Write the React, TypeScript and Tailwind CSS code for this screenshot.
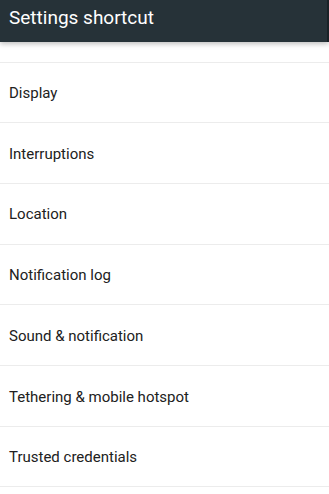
const items = [
  'Display',
  'Interruptions',
  'Location',
  'Notification log',
  'Sound & notification',
  'Tethering & mobile hotspot',
  'Trusted credentials',
];

export default function App() {
  return (
    <div className="w-[329px] h-[494px] overflow-hidden bg-white" style={{ fontFamily: 'Roboto, "Noto Sans", sans-serif' }}>
      <div className="relative z-10 h-[42px] bg-[#263238] border-r-2 border-[#1a2227] flex items-center pl-[9px] pb-[7px] shadow-[0_2px_5px_rgba(0,0,0,0.25)]">
        <span className="text-white text-[19px] leading-none">Settings shortcut</span>
      </div>
      <div className="h-[20.5px] border-b border-[#ececec]" />
      {items.map((label) => (
        <div
          key={label}
          className="h-[60.7px] border-b border-[#ececec] flex items-center pl-[9px] pt-[2px] text-[15px] text-[#212121]"
        >
          {label}
        </div>
      ))}
    </div>
  );
}
